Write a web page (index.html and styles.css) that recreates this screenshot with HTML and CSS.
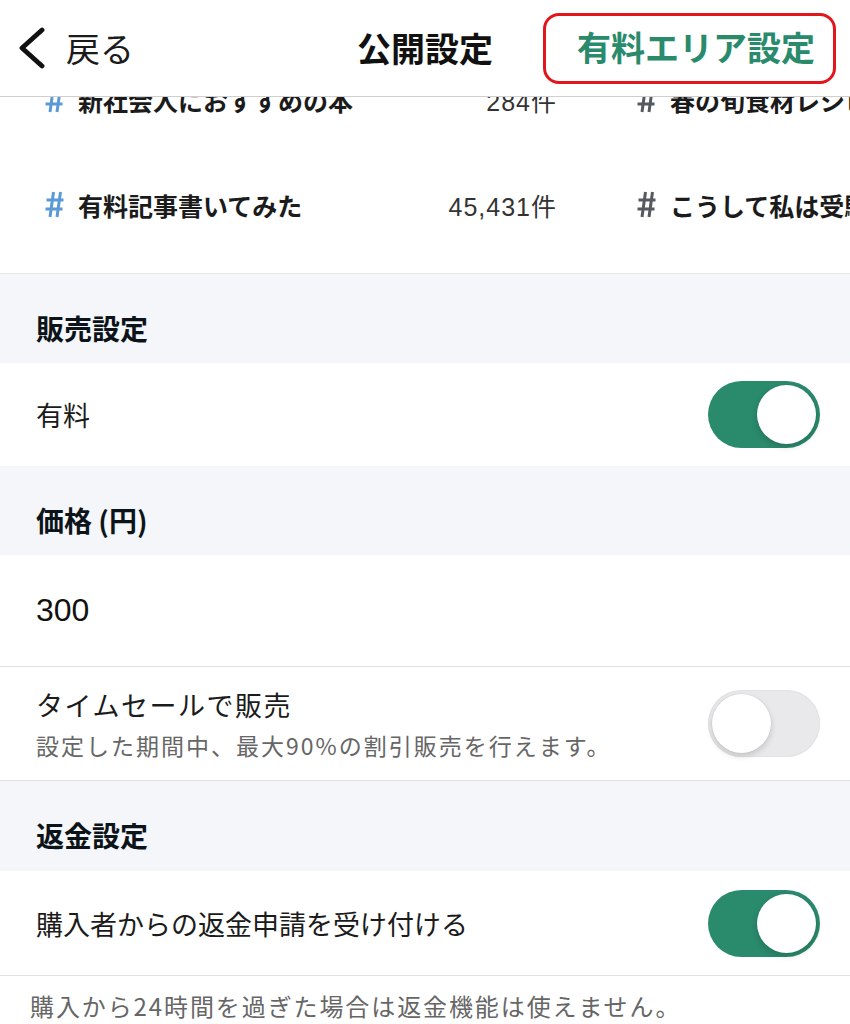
FILE: index.html
```html
<!DOCTYPE html>
<html lang="ja">
<head>
<meta charset="utf-8">
<link rel="stylesheet" href="styles.css">
</head>
<body>
<header class="nav">
  <div class="nav-left">
    <svg class="chev" width="30" height="42" viewBox="0 0 30 42"><path d="M25 3 L5 21 L25 39" fill="none" stroke="#111" stroke-width="4.8" stroke-linecap="round" stroke-linejoin="round"/></svg>
    <span class="back">戻る</span>
  </div>
  <div class="nav-title">公開設定</div>
  <div class="nav-right"><span class="paid-btn">有料エリア設定</span></div>
</header>

<section class="tags">
  <div class="tag-grid">
    <div class="tag">
      <svg class="hash blue" width="19" height="27" viewBox="0 0 19 27"><path d="M8.5 1 L5 26 M15.5 1 L12 26 M1.5 9 H18.5 M0.5 18 H17.5" fill="none" stroke="currentColor" stroke-width="3"/></svg>
      <span class="tag-name">新社会人におすすめの本</span>
      <span class="tag-count">284件</span>
    </div>
    <div class="tag">
      <svg class="hash gray" width="19" height="27" viewBox="0 0 19 27"><path d="M8.5 1 L5 26 M15.5 1 L12 26 M1.5 9 H18.5 M0.5 18 H17.5" fill="none" stroke="currentColor" stroke-width="3"/></svg>
      <span class="tag-name">春の旬食材レシピ</span>
      <span class="tag-count">1,203件</span>
    </div>
    <div class="tag">
      <svg class="hash blue" width="19" height="27" viewBox="0 0 19 27"><path d="M8.5 1 L5 26 M15.5 1 L12 26 M1.5 9 H18.5 M0.5 18 H17.5" fill="none" stroke="currentColor" stroke-width="3"/></svg>
      <span class="tag-name">有料記事書いてみた</span>
      <span class="tag-count">45,431件</span>
    </div>
    <div class="tag">
      <svg class="hash gray" width="19" height="27" viewBox="0 0 19 27"><path d="M8.5 1 L5 26 M15.5 1 L12 26 M1.5 9 H18.5 M0.5 18 H17.5" fill="none" stroke="currentColor" stroke-width="3"/></svg>
      <span class="tag-name">こうして私は受験に合格した</span>
      <span class="tag-count">8,912件</span>
    </div>
  </div>
</section>

<div class="sec-head h-sale">販売設定</div>
<div class="row r-paid">
  <span class="label">有料</span>
  <span class="toggle on"><span class="knob"></span></span>
</div>

<div class="sec-head h-price">価格 (円)</div>
<div class="row r-price bordered">
  <span class="value">300</span>
</div>
<div class="row r-sale bordered">
  <div class="stack">
    <span class="label">タイムセールで販売</span>
    <span class="sub">設定した期間中、最大90%の割引販売を行えます。</span>
  </div>
  <span class="toggle off"><span class="knob"></span></span>
</div>

<div class="sec-head h-refund">返金設定</div>
<div class="row r-refund bordered">
  <span class="label">購入者からの返金申請を受け付ける</span>
  <span class="toggle on"><span class="knob"></span></span>
</div>
<p class="note">購入から24時間を過ぎた場合は返金機能は使えません。</p>
</body>
</html>
```

FILE: styles.css
```css
* { box-sizing: border-box; }
html, body {
  margin: 0;
  padding: 0;
  background: #fff;
  font-family: "Noto Sans CJK JP", "Noto Sans", sans-serif;
  color: #1b1b1b;
  overflow: hidden;
}
.nav {
  height: 97px;
  border-bottom: 1px solid #cfcfcf;
  display: grid;
  grid-template-columns: 1fr auto 1fr;
  align-items: center;
  background: #fff;
}
.nav-left {
  display: flex;
  align-items: center;
  padding-left: 17px;
  gap: 19px;
}
.back {
  font-size: 34px;
  color: #1b1b1b;
  line-height: 1;
}
.nav-title {
  font-size: 34px;
  font-weight: 700;
  line-height: 1;
  color: #111;
}
.nav-right {
  display: flex;
  justify-content: flex-end;
  padding-right: 14px;
}
.paid-btn {
  display: flex;
  align-items: center;
  height: 71px;
  padding: 0 18px 2px 31px;
  border: 3px solid #e3151c;
  border-radius: 16px;
  color: #2a8a6c;
  font-size: 34px;
  font-weight: 700;
  line-height: 1;
}
.tags {
  height: 177px;
  overflow: hidden;
  border-bottom: 1px solid #e8e8e8;
}
.tag-grid {
  margin-top: -50px;
  padding-left: 45px;
  display: grid;
  grid-template-columns: 512px 512px;
  grid-auto-rows: 105px;
  column-gap: 80px;
  width: 1400px;
}
.tag {
  display: flex;
  align-items: center;
  gap: 14px;
}
.hash { flex: none; }
.hash.blue { color: #5b9ad6; }
.hash.gray { color: #555a60; }
.tag-name {
  font-size: 25px;
  font-weight: 700;
  color: #1b1b1b;
  white-space: nowrap;
  flex: 1;
}
.tag-count {
  font-family: "Liberation Sans", "Noto Sans CJK JP", sans-serif;
  font-size: 25px;
  letter-spacing: 1px;
  color: #333;
  white-space: nowrap;
}
.sec-head {
  background: #f4f6f9;
  display: flex;
  align-items: center;
  padding: 18px 0 0 36px;
  font-size: 28px;
  font-weight: 700;
  color: #0c141a;
}
.h-sale { height: 89px; }
.h-price { height: 89px; }
.h-refund { height: 90px; }
.row {
  display: flex;
  align-items: center;
  justify-content: space-between;
  padding: 0 30px 0 36px;
}
.bordered { border-bottom: 1px solid #e0e0e0; }
.r-paid { height: 103px; }
.r-price { height: 112px; }
.r-sale { height: 114px; }
.r-refund { height: 105px; }
.label {
  font-size: 27px;
  color: #1b1b1b;
}
.r-sale .label { letter-spacing: 1.5px; }
.value {
  font-family: "Liberation Sans", "Noto Sans CJK JP", sans-serif;
  font-size: 32px;
  color: #111;
}
.stack {
  display: flex;
  flex-direction: column;
  gap: 4px;
}
.sub {
  font-size: 23px;
  letter-spacing: 2px;
  color: #666;
}
.toggle {
  width: 112px;
  height: 67px;
  border-radius: 34px;
  display: flex;
  align-items: center;
  padding: 0 4px;
  flex: none;
}
.toggle.on {
  background: #2a8a6c;
  justify-content: flex-end;
}
.toggle.off {
  background: #e9e9eb;
  justify-content: flex-start;
  box-shadow: inset 0 0 0 1px #e2e2e4;
}
.knob {
  width: 59px;
  height: 59px;
  border-radius: 50%;
  background: #fff;
  box-shadow: 0 3px 6px rgba(0,0,0,0.16), 0 0 0 0.5px rgba(0,0,0,0.06);
}
.note {
  margin: 0;
  padding: 12px 0 0 30px;
  font-size: 24px;
  letter-spacing: 1.9px;
  color: #666;
}
```
